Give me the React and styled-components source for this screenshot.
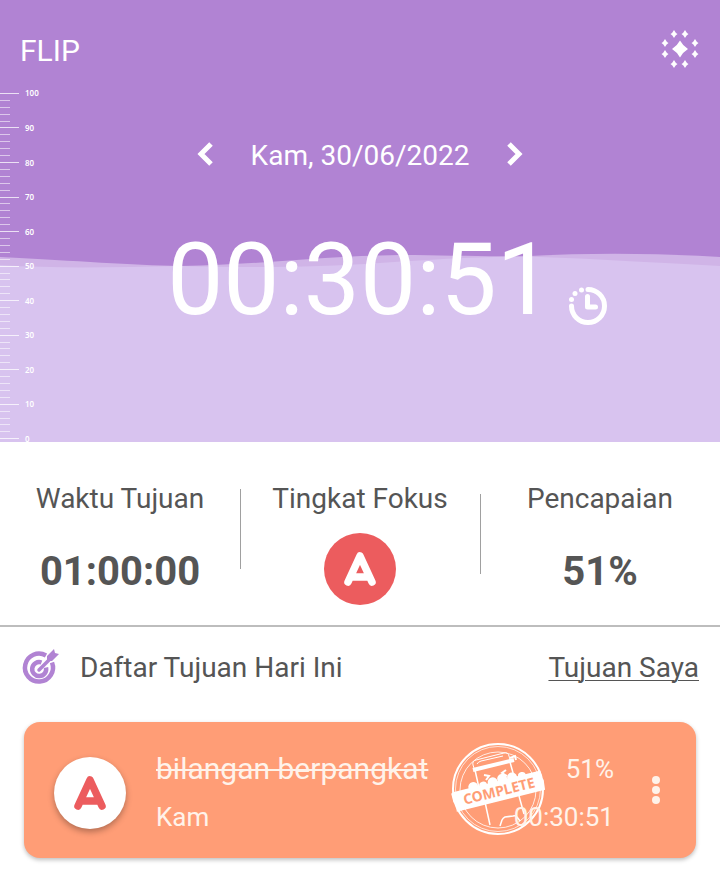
import styled, { createGlobalStyle } from 'styled-components'

const ungu = '#b183d3'
const unguTengah = '#d0b4e7'
const unguMuda = '#d8c3ef'
const abu = '#555555'
const merah = '#ec5c5e'
const oranye = '#ff9d76'
const krem = '#fff3ea'

const GlobalStyle = createGlobalStyle`
  * {
    box-sizing: border-box;
    margin: 0;
    padding: 0;
  }

  body {
    background: #fff;
    color: ${abu};
    font-family: Roboto, "Liberation Sans", sans-serif;
    font-size: 28px;
  }

  button {
    display: flex;
    background: none;
    border: none;
    color: inherit;
    cursor: pointer;
  }

  svg {
    display: block;
  }
`
const Hero = styled.header`
  position: relative;
  display: flex;
  flex-direction: column;
  padding-bottom: 102px;
  background: ${ungu};
  color: #fff;
`
const Wave = styled.svg`
  position: absolute;
  inset: auto 0 0;
  width: 100%;
  height: 196px;
`
const Ruler = styled.ul`
  position: absolute;
  top: 90px;
  bottom: 0;
  left: 0;
  display: flex;
  flex-direction: column;
  list-style: none;
`
const Mark = styled.li`
  flex: 1;
  display: flex;
  align-items: center;
  gap: 6px;
  height: 0;
  font-family: "Noto Sans", sans-serif;
  font-size: 8px;
  font-weight: 600;
  line-height: 1;

  &::before {
    content: "";
    width: ${p => p.$major ? "19px" : "10px"};
    height: 1px;
    background: rgba(255, 255, 255, ${p => p.$major ? .75 : .55});
  }
`
const TopBar = styled.div`
  position: relative;
  display: flex;
  align-items: center;
  justify-content: space-between;
  height: 100px;
  padding: 0 20px;
`
const Title = styled.h1`
  font-size: 30px;
  font-weight: 400;
`
const DateNav = styled.nav`
  position: relative;
  display: flex;
  align-items: center;
  justify-content: center;
  gap: 34px;
  height: 110px;
`
const Timer = styled.div`
  position: relative;
  display: flex;
  align-items: flex-end;
  justify-content: center;
  gap: 15px;
  padding: 10px 0 0 55px;
  line-height: 120px;
  font-size: 100px;

  button {
    padding-bottom: 14px;
  }
`
const Stats = styled.section`
  display: grid;
  grid-template-columns: repeat(3, 1fr);
  padding: 41px 0 20px;
  border-bottom: 2px solid #bdbdbd;
`
const Stat = styled.div`
  display: flex;
  flex-direction: column;
  align-items: center;
  gap: 18px;
  line-height: 32px;
`
const Divided = styled(Stat)`
  background: linear-gradient(#a0a0a0, #a0a0a0) left ${p => p.$low ? "11px" : "6px"} / 1px 80px no-repeat;
`
const StatValue = styled.strong`
  display: flex;
  align-items: center;
  height: 72px;
  padding-top: 6px;
  font-size: 40px;
  font-weight: 700;
`
const Grade = styled.span`
  flex: none;
  display: flex;
  align-items: center;
  justify-content: center;
  width: 72px;
  height: 72px;
  border-radius: 50%;
  color: ${p => p.$inverse ? merah : "#fff"};
  background: ${p => p.$inverse ? "#fff" : merah};
  box-shadow: ${p => p.$inverse ? "0 3px 6px rgba(0, 0, 0, .3)" : "none"};
`
const ListHead = styled.div`
  display: flex;
  align-items: center;
  height: 80px;
  gap: 20px;
  padding: 0 21px;
  color: ${abu};
`
const ListTitle = styled.h2`
  flex: 1;
  font-size: 28px;
  font-weight: 400;
`
const MyGoals = styled.a`
  color: inherit;
  text-decoration: underline;
  text-decoration-thickness: 1px;
  text-underline-offset: 3px;
`
const Goal = styled.article`
  position: relative;
  display: flex;
  align-items: center;
  min-height: 136px;
  margin: 15px 24px 24px;
  padding: 6px 32px 0 30px;
  border-radius: 16px;
  background: ${oranye};
  color: ${krem};
  box-shadow: 0 2px 4px rgba(0, 0, 0, .25);

  button {
    margin-bottom: 6px;
  }
`
const GoalText = styled.div`
  flex: 1;
  display: flex;
  flex-direction: column;
  gap: 16px;
  padding-left: 30px;
  font-size: 26px;
  line-height: 32px;
`
const GoalName = styled.s`
  font-size: 30px;
  text-decoration-thickness: 2px;
`
const GoalResult = styled(GoalText)`
  position: relative;
  flex: none;
  align-items: flex-end;
  padding: 0 34px 0 0;
`
const Stamp = styled.svg`
  position: absolute;
  right: 148px;
  top: 20px;
  width: 100px;
  height: 96px;
`

const marks = Array.from({ length: 51 }, (_, i) => 100 - i * 2)

const LetterA = () => (
  <svg width="36" height="38" viewBox="0 0 36 38" fill="none" stroke="currentColor" strokeWidth="7.500" strokeLinecap="round" strokeLinejoin="round">
    <path d="M6 32 18 6l12 26M10 27h16" />
  </svg>
)

const Chevron = ({ flip }) => (
  <svg width="24" height="28" viewBox="0 0 24 28" fill="none" stroke="currentColor" strokeWidth="5">
    <path d={flip ? "M6 3l10 10L6 23" : "M18 3 8 13l10 10"} />
  </svg>
)

const dots = [[14, 4], [25, 4], [5, 13], [35, 13], [5, 24], [35, 24], [14, 34], [25, 34]]

const Sparkle = () => (
  <svg width="40" height="40" viewBox="0 0 40 40" fill="currentColor">
    <path d="M20 10.500q3 5.500 8 8.500-5 3-8 8.500-3-5.500-8-8.500 5-3 8-8.500z" />
    {dots.map(([x, y]) => (
      <path key={`${x}-${y}`} d={`M${x} ${y - 4}q1.500 3 3.500 4-2 1-3.500 4-1.500-3-3.500-4 2-1 3.500-4z`} />
    ))}
  </svg>
)

const ClockIcon = () => (
  <svg width="40" height="40" viewBox="0 0 40 40" fill="none" stroke="currentColor" strokeWidth="5" strokeLinecap="round">
    <path d="M20 3.500a16.500 16.500 0 1 1-16.500 16.500" />
    <path d="M19.500 10.500v10.500h8" strokeLinejoin="round" />
    <g fill="currentColor" stroke="none">
      <circle cx="13.500" cy="4" r="2.500" />
      <circle cx="7" cy="7.500" r="2.500" />
      <circle cx="3.500" cy="13.500" r="2.500" />
    </g>
  </svg>
)

const TargetIcon = () => (
  <svg width="39" height="38" viewBox="0 0 39 38" fill="none" stroke={ungu} strokeWidth="4.500">
    <path d="M25 7.500a14 14 0 1 0 6 7" />
    <path d="M20.500 14.500a7 7 0 1 0 4.500 5" />
    <path d="M18 22 30 10" strokeWidth="3.500" strokeLinecap="round" />
    <path d="M26 13V8l7-7 1 4 4 1-7 7z" fill={ungu} stroke="none" />
  </svg>
)

const MoreIcon = () => (
  <svg width="16" height="32" viewBox="0 0 16 32" fill="currentColor">
    <circle cx="8" cy="6" r="4" />
    <circle cx="8" cy="16" r="4" />
    <circle cx="8" cy="26" r="4" />
  </svg>
)

const CompleteStamp = () => (
  <Stamp viewBox="0 0 100 96" fill="none" stroke="#fff" strokeWidth="1">
    <circle cx="50" cy="47" r="45" strokeWidth="2" />
    <circle cx="50" cy="47" r="42.500" opacity=".7" />
    <circle cx="50" cy="48" r="38" opacity=".8" />
    <path d="M26 26l-1-3q-1-4 3-5l28-7q4-1 5 3l1 4M29 22q1-2 4-3l22-5" />
    <path d="M25 28l41-10" strokeWidth="4" />
    <path d="M62 16l5-2 1 4" strokeWidth="2" />
    <path d="M27 28l4 18M62 20l5 18M37 60l5 23M71 54l5 18" strokeWidth="1.500" />
    <path d="M36 33l5 1-3 4M58 28l-4 3 5 3" strokeWidth="2" />
    <path d="M52 84l2-6q1-2 3-3l8-1q3-1 4 1l3 4" strokeWidth="1.500" />
    <g transform="rotate(-14 51 49)">
      <g fill="#fff" stroke="none">
        <circle cx="27" cy="39" r="5" />
        <circle cx="37" cy="40" r="4" />
        <circle cx="47" cy="39" r="5" />
        <circle cx="57" cy="38" r="5" />
        <circle cx="67" cy="39" r="5" />
        <circle cx="77" cy="40" r="4" />
        <path d="M4 40l2-1h90v8l1 2-1 10H5l1-7-2-3z" />
      </g>
      <text x="51" y="54" textAnchor="middle" fill={oranye} stroke="none" fontFamily="Noto Sans, sans-serif" fontSize="14" fontWeight="700">COMPLETE</text>
    </g>
  </Stamp>
)

export default function App() {
  return (
    <>
      <GlobalStyle />
      <Hero>
        <Wave viewBox="0 0 720 196" preserveAspectRatio="none">
          <path fill={unguTengah} d="M0 11C80 15 130 19 180 20 260 19 320 10 400 9c50 0 80 2 130 1 60-3 120-3 190 1v185H0z" />
          <path fill={unguMuda} d="M0 19c60 4 120 2 180 1 80 2 140 1 200-3 60-4 110-7 160-6 60 2 120 6 180 9v176H0z" />
        </Wave>
        <Ruler>
          {marks.map(n => (
            <Mark key={n} $major={n % 10 === 0}>{n % 10 === 0 && n}</Mark>
          ))}
        </Ruler>
        <TopBar>
          <Title>FLIP</Title>
          <button aria-label="Tema"><Sparkle /></button>
        </TopBar>
        <DateNav>
          <button aria-label="Hari sebelumnya"><Chevron /></button>
          <time dateTime="2022-06-30">Kam, 30/06/2022</time>
          <button aria-label="Hari berikutnya"><Chevron flip /></button>
        </DateNav>
        <Timer>
          <time>00:30:51</time>
          <button aria-label="Riwayat waktu"><ClockIcon /></button>
        </Timer>
      </Hero>
      <main>
        <Stats>
          <Stat>
            Waktu Tujuan
            <StatValue>01:00:00</StatValue>
          </Stat>
          <Divided>
            Tingkat Fokus
            <Grade role="img" aria-label="A"><LetterA /></Grade>
          </Divided>
          <Divided $low>
            Pencapaian
            <StatValue>51%</StatValue>
          </Divided>
        </Stats>
        <ListHead>
          <TargetIcon />
          <ListTitle>Daftar Tujuan Hari Ini</ListTitle>
          <MyGoals href="#tujuan">Tujuan Saya</MyGoals>
        </ListHead>
        <Goal>
          <Grade $inverse role="img" aria-label="A"><LetterA /></Grade>
          <GoalText>
            <GoalName>bilangan berpangkat</GoalName>
            <span>Kam</span>
          </GoalText>
          <CompleteStamp />
          <GoalResult>
            <span>51%</span>
            <span>00:30:51</span>
          </GoalResult>
          <button aria-label="Menu"><MoreIcon /></button>
        </Goal>
      </main>
    </>
  )
}
